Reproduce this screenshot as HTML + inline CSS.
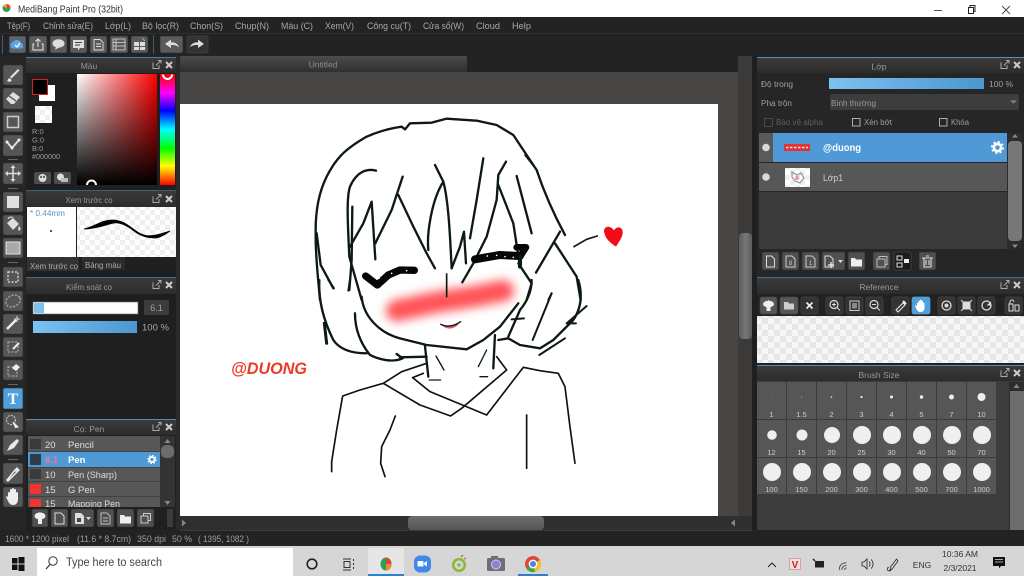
<!DOCTYPE html>
<html><head><meta charset="utf-8"><title>MediBang Paint Pro</title>
<style>html,body{margin:0;padding:0;background:#222;width:1024px;height:576px;overflow:hidden}svg{display:block}
svg.root{filter:blur(.3px)}
text{font-family:"Liberation Sans",sans-serif}</style></head><body>
<svg class="root" xmlns="http://www.w3.org/2000/svg" width="1024" height="576" viewBox="0 0 1024 576">
<defs>
<pattern id="ck" width="10" height="10" patternUnits="userSpaceOnUse"><rect width="10" height="10" fill="#fff"/><rect width="5" height="5" fill="#efefef"/><rect x="5" y="5" width="5" height="5" fill="#efefef"/></pattern>
<pattern id="ck2" width="12" height="12" patternUnits="userSpaceOnUse"><rect width="12" height="12" fill="#f6f6f6"/><rect width="6" height="6" fill="#e6e6e6"/><rect x="6" y="6" width="6" height="6" fill="#e6e6e6"/></pattern>
<linearGradient id="sv" x1="0" x2="1" y1="0" y2="0"><stop offset="0" stop-color="#fff"/><stop offset="1" stop-color="#f00"/></linearGradient>
<linearGradient id="svk" x1="0" x2="0" y1="0" y2="1"><stop offset="0" stop-color="#000" stop-opacity="0"/><stop offset="1" stop-color="#000"/></linearGradient>
<linearGradient id="hue" x1="0" x2="0" y1="0" y2="1"><stop offset="0" stop-color="#f00"/><stop offset=".17" stop-color="#f0f"/><stop offset=".33" stop-color="#00f"/><stop offset=".5" stop-color="#0ff"/><stop offset=".67" stop-color="#0f0"/><stop offset=".83" stop-color="#ff0"/><stop offset="1" stop-color="#f00"/></linearGradient>
<linearGradient id="blue" x1="0" x2="1" y1="0" y2="0"><stop offset="0" stop-color="#7cc2f2"/><stop offset="1" stop-color="#4b97cf"/></linearGradient>
<linearGradient id="hd" x1="0" x2="0" y1="0" y2="1"><stop offset="0" stop-color="#3a3a3a"/><stop offset="1" stop-color="#2c2c2c"/></linearGradient>
<linearGradient id="tab" x1="0" x2="0" y1="0" y2="1"><stop offset="0" stop-color="#4c4c4c"/><stop offset="1" stop-color="#2f2f2f"/></linearGradient>
<linearGradient id="thumb" x1="0" x2="1" y1="0" y2="0"><stop offset="0" stop-color="#5c5c5c"/><stop offset=".5" stop-color="#777"/><stop offset="1" stop-color="#5c5c5c"/></linearGradient>
<linearGradient id="thumbh" x1="0" x2="0" y1="0" y2="1"><stop offset="0" stop-color="#6c6c6c"/><stop offset="1" stop-color="#565656"/></linearGradient>
<filter id="bl" x="-30%" y="-150%" width="160%" height="400%"><feGaussianBlur stdDeviation="15"/></filter>
<g id="gear"><circle r="3.6" fill="none" stroke="#fff" stroke-width="2.6"/><circle r="5.6" fill="none" stroke="#fff" stroke-width="1.8" stroke-dasharray="2.2 2.2"/></g>
<g id="pop"><path d="M-4 -2.500V3.500H2V0" fill="none" stroke="#aaa" stroke-width="1"/><path d="M-1 .5L3.500 -4M1 -4.500H4V-1.500" fill="none" stroke="#aaa" stroke-width="1"/></g>
<g id="xx"><path d="M-3 -3L3 3M3 -3L-3 3" stroke="#ccc" stroke-width="2"/></g>
</defs>

<rect width="1024" height="576" fill="#232323"/>

<!-- title bar -->
<rect width="1024" height="17" fill="#fff"/>
<circle cx="6.500" cy="8" r="4" fill="#2f9c5c"/><path d="M6.500 4a4 4 0 0 1 4 4h-4z" fill="#e24a3c"/><path d="M3 6a4 4 0 0 1 3.500-2v4z" fill="#e9b93a"/>
<text x="18" y="12.300" font-size="10" fill="#333" textLength="105" lengthAdjust="spacingAndGlyphs">MediBang Paint Pro (32bit)</text>
<path d="M934 10.500H942" stroke="#555" stroke-width="1"/>
<path d="M968.500 7.500h5v6h-5zM970 7.500V5.500h5v6h-1.500" fill="none" stroke="#222" stroke-width="1"/>
<path d="M1002 6l8 8M1010 6l-8 8" stroke="#444" stroke-width=".9"/>

<!-- menu -->
<g font-size="9" fill="#a8a8a8">
<text x="7" y="29" textLength="23" lengthAdjust="spacingAndGlyphs">Tệp(F)</text>
<text x="43" y="29" textLength="50" lengthAdjust="spacingAndGlyphs">Chỉnh sửa(E)</text>
<text x="105" y="29" textLength="26" lengthAdjust="spacingAndGlyphs">Lớp(L)</text>
<text x="142" y="29" textLength="37" lengthAdjust="spacingAndGlyphs">Bộ lọc(R)</text>
<text x="190" y="29" textLength="33" lengthAdjust="spacingAndGlyphs">Chọn(S)</text>
<text x="235" y="29" textLength="34" lengthAdjust="spacingAndGlyphs">Chụp(N)</text>
<text x="281" y="29" textLength="32" lengthAdjust="spacingAndGlyphs">Màu (C)</text>
<text x="325" y="29" textLength="29" lengthAdjust="spacingAndGlyphs">Xem(V)</text>
<text x="367" y="29" textLength="44" lengthAdjust="spacingAndGlyphs">Công cụ(T)</text>
<text x="423" y="29" textLength="41" lengthAdjust="spacingAndGlyphs">Cửa sổ(W)</text>
<text x="476" y="29" textLength="24" lengthAdjust="spacingAndGlyphs">Cloud</text>
<text x="512" y="29" textLength="19" lengthAdjust="spacingAndGlyphs">Help</text>
</g>
<rect y="33" width="1024" height="1" fill="#303030"/>

<!-- toolbar -->
<rect x="2" y="35" width="1" height="19" fill="#3b5f78"/><rect x="153" y="35" width="1" height="19" fill="#3b5f78"/>
<g fill="#5a5a5a" stroke="#2a2a2a" stroke-width=".6">
<rect x="9" y="36" width="17" height="17" rx="2" fill="#5f646b"/><rect x="29" y="36" width="18" height="17" rx="2"/><rect x="50" y="36" width="17" height="17" rx="2"/><rect x="70" y="36" width="17" height="17" rx="2"/><rect x="90" y="36" width="17" height="17" rx="2"/><rect x="110" y="36" width="18" height="17" rx="2"/><rect x="131" y="36" width="17" height="17" rx="2"/><rect x="160" y="36" width="23" height="17" rx="2"/><rect x="187" y="36" width="21" height="17" rx="2" fill="#333" stroke="#4a4a4a"/>
</g>
<path d="M12.500 48.500a3.500 3.500 0 0 1 .5-6.500a4.500 4.500 0 0 1 8 1a3 3 0 0 1 .5 5.500z" fill="#5ba6e4"/><path d="M15 45l2 2 3-4" stroke="#fff" stroke-width="1.200" fill="none"/>
<path d="M38 39v8M35.500 41.500L38 39l2.500 2.500M34.500 44H33v6h10v-6h-1.500" stroke="#e8e8e8" fill="none" stroke-width="1"/>
<ellipse cx="58.500" cy="43.500" rx="6" ry="4.200" fill="#ddd"/><path d="M56 47l-1 3 4-2.500z" fill="#ddd"/>
<path d="M73 40h11v8h-4l-2 2.500V48h-5z" fill="#ddd"/><path d="M75 42.500h7M75 45h5" stroke="#444"/>
<path d="M94 39.500h6l3 3v7.500h-9z M96 44h5M96 46.500h5" fill="none" stroke="#ddd" stroke-width=".9"/>
<path d="M113 39h12v11h-12zM113 42.500h12M113 46h12M116 39v11" fill="none" stroke="#ddd" stroke-width=".8"/>
<path d="M134 42h5v4h-5zM140 42h5v4h-5zM134 47h5v3h-5zM140 47h5v3h-5z" fill="#ddd"/><path d="M142 38l3 3" stroke="#aaa"/>
<path d="M165 44l6-4.500v2.800c4 0 7 1.500 8 5-2-2-5-2.500-8-2.300v3z" fill="#ddd"/>
<path d="M204 44l-6-4.500v2.800c-4 0-7 1.500-8 5 2-2 5-2.500 8-2.300v3z" fill="#ddd"/>

<!-- left strip -->
<rect y="56" width="26" height="474" fill="#262626"/>
<g fill="#565656" stroke="#2e2e2e" stroke-width=".6">
<rect x="3" y="65" width="20" height="20" rx="2"/><rect x="3" y="88" width="20" height="21" rx="2"/><rect x="3" y="112" width="20" height="20" rx="2"/><rect x="3" y="135" width="20" height="21" rx="2"/>
<rect x="3" y="163" width="20" height="21" rx="2"/><rect x="3" y="192" width="20" height="20" rx="2"/><rect x="3" y="215" width="20" height="20" rx="2"/><rect x="3" y="238" width="20" height="20" rx="2"/>
<rect x="3" y="267" width="20" height="20" rx="2"/><rect x="3" y="291" width="20" height="20" rx="2"/><rect x="3" y="314" width="20" height="20" rx="2"/><rect x="3" y="337" width="20" height="20" rx="2"/><rect x="3" y="360" width="20" height="20" rx="2"/>
<rect x="3" y="388" width="20" height="21" rx="2" fill="#4f9fdc"/><rect x="3" y="412" width="20" height="20" rx="2"/><rect x="3" y="435" width="20" height="20" rx="2"/>
<rect x="3" y="463" width="20" height="21" rx="2"/><rect x="3" y="487" width="20" height="20" rx="2"/>
</g>
<g fill="#666"><rect x="8" y="159" width="10" height="1"/><rect x="8" y="188" width="10" height="1"/><rect x="8" y="262" width="10" height="1"/><rect x="8" y="384" width="10" height="1"/><rect x="8" y="459" width="10" height="1"/></g>
<path d="M7 81l2-3 3 2-2 2zM10 77l8-8 1.500 1.500-8 8z" fill="#e4e4e4"/>
<path d="M6 99l7-7 7 5-6 7h-3z" fill="#ddd"/><path d="M9 96l7 5" stroke="#4c4c4c" stroke-width="1.300"/>
<rect x="7.500" y="116.500" width="11" height="11" fill="none" stroke="#ccc" stroke-width="1.500"/>
<path d="M7 142l5 6 7-8" fill="none" stroke="#e0e0e0" stroke-width="2"/><circle cx="7" cy="142" r="1.500" fill="#eee"/><circle cx="12" cy="148" r="1.500" fill="#eee"/><circle cx="19" cy="140" r="1.500" fill="#eee"/>
<path d="M13 166v15M5.500 173.500h15" stroke="#ddd" stroke-width="1.500"/><path d="M13 165l-2.500 3h5zM13 182l-2.500-3h5zM5 173.500l3-2.500v5zM21 173.500l-3-2.500v5z" fill="#ddd"/>
<rect x="7" y="196" width="12" height="12" fill="#e0e0e0"/>
<path d="M7 223l6-5 6 6-6 6z" fill="#ddd"/><path d="M8 219a3 3 0 0 1 5-1" fill="none" stroke="#ddd"/><path d="M19 226c2 2 2 4 0 5-1-1-1-3 0-5z" fill="#ddd"/>
<rect x="6" y="242" width="14" height="12" fill="#aaa"/><rect x="6" y="242" width="14" height="12" fill="none" stroke="#ddd"/>
<rect x="8" y="272" width="10" height="10" fill="none" stroke="#ccc" stroke-width="1.500" stroke-dasharray="2 1.500"/>
<ellipse cx="13" cy="301" rx="7.500" ry="5.500" transform="rotate(-25 13 301)" fill="none" stroke="#aaa" stroke-width="1.300" stroke-dasharray="2 1.500"/>
<path d="M7 329l9-9" stroke="#eee" stroke-width="2.500"/><path d="M17 316v6M14 319h6" stroke="#ddd"/>
<rect x="8" y="342" width="10" height="10" fill="none" stroke="#bbb" stroke-dasharray="2 1.500"/><path d="M13 349l6-6" stroke="#eee" stroke-width="2"/>
<rect x="8" y="367" width="9" height="9" fill="none" stroke="#bbb" stroke-dasharray="2 1.500"/><path d="M12 368l4-4 4 3-4 4z" fill="#eee"/>
<text x="13" y="404" font-size="16" font-weight="bold" fill="#fff" text-anchor="middle" style="font-family:'Liberation Serif',serif">T</text>
<circle cx="11" cy="420" r="4.500" fill="none" stroke="#ccc" stroke-dasharray="2 1"/><path d="M13 422l5 5-2.500 .5z" fill="#eee" stroke="#eee"/>
<path d="M7 451l3-6 7-6 2 2-5 7z" fill="#e8e8e8"/>
<path d="M8 479l-1 1 1 1 9-9-2-2z" fill="none" stroke="#eee" stroke-width="1.500"/><path d="M16 468l3 3" stroke="#eee" stroke-width="2.500"/>
<path d="M8 497v-4a1 1 0 0 1 2 0v-3a1 1 0 0 1 2 0v-1a1 1 0 0 1 2 0v1a1 1 0 0 1 2 0v3a1 1 0 0 1 2 0v6c0 4-2 6-5 6s-4-2-5-4l-2-4c0-1 1-1 2 0z" fill="#eee"/>

<!-- colour panel -->
<rect x="26" y="57" width="150" height="473" fill="#1f1f1f"/>
<rect x="176" y="56" width="4" height="474" fill="#2a2a2a"/>
<rect x="26" y="57" width="150" height="1" fill="#4b7f9f"/>
<rect x="26" y="58" width="150" height="15" fill="url(#hd)"/>
<text x="89" y="69" font-size="8.500" fill="#999" text-anchor="middle">Màu</text>
<use href="#pop" x="157" y="65"/><use href="#xx" x="169" y="65"/>
<rect x="39" y="85" width="16" height="16" fill="#fff"/>
<rect x="32.500" y="79.500" width="15" height="15" fill="#000" stroke="#d52020" stroke-width="1"/>
<rect x="35" y="106" width="17" height="17" fill="url(#ck)"/>
<g font-size="7.500" fill="#9a9a9a"><text x="32" y="134">R:0</text><text x="32" y="142.500">G:0</text><text x="32" y="151">B:0</text><text x="32" y="159" textLength="28" lengthAdjust="spacingAndGlyphs">#000000</text></g>
<rect x="34" y="172" width="17" height="12" rx="2" fill="#4c4c4c"/><rect x="54" y="172" width="17" height="12" rx="2" fill="#4c4c4c"/>
<circle cx="42.500" cy="178" r="4" fill="#ddd"/><circle cx="41" cy="177" r="1" fill="#444"/><circle cx="44" cy="177" r="1" fill="#444"/><circle cx="60.500" cy="177" r="3.500" fill="#ddd"/><rect x="61" y="178" width="7" height="4" fill="#bbb"/>
<rect x="77" y="74" width="80" height="111" fill="url(#sv)"/><rect x="77" y="74" width="80" height="111" fill="url(#svk)"/>
<rect x="160" y="74" width="15" height="111" fill="url(#hue)"/>
<path d="M163 74.500a4.500 4.500 0 0 0 9 0" fill="none" stroke="#fff" stroke-width="2"/>
<path d="M87 185a4.500 4.500 0 0 1 9 0" fill="none" stroke="#fff" stroke-width="2"/>

<!-- brush preview -->
<rect x="26" y="190" width="150" height="1" fill="#3f5f75"/>
<rect x="26" y="191" width="150" height="16" fill="url(#hd)"/>
<text x="89" y="203" font-size="8.500" fill="#999" text-anchor="middle" textLength="47" lengthAdjust="spacingAndGlyphs">Xem trước cọ</text>
<use href="#pop" x="157" y="199"/><use href="#xx" x="169" y="199"/>
<rect x="27" y="207" width="49" height="50" fill="#fff"/>
<rect x="77" y="207" width="99" height="50" fill="url(#ck)"/>
<text x="30" y="216" font-size="8" fill="#5a94c4" textLength="35" lengthAdjust="spacingAndGlyphs">* 0.44mm</text>
<circle cx="51" cy="231" r="1" fill="#222"/>
<path d="M84 229c12-3 18-9 28-9s16 5 24 11 14 5 20 4 10-3 14-4c-4 3-10 7-16 7s-14-2-20-7-14-9-20-8-18 6-30 6z" fill="#000" stroke="#000" stroke-width=".8"/>
<rect x="27" y="257" width="52" height="14" fill="#333"/>
<text x="30" y="269" font-size="8.500" fill="#aaa" textLength="48" lengthAdjust="spacingAndGlyphs">Xem trước cọ</text>
<rect x="82" y="257" width="43" height="13" fill="#2b2b2b"/>
<text x="85" y="268" font-size="8.500" fill="#aaa" textLength="36" lengthAdjust="spacingAndGlyphs">Bảng màu</text>

<!-- brush control -->
<rect x="26" y="277" width="150" height="1" fill="#3f6f8f"/>
<rect x="26" y="278" width="150" height="16" fill="url(#hd)"/>
<text x="89" y="290" font-size="8.500" fill="#999" text-anchor="middle" textLength="46" lengthAdjust="spacingAndGlyphs">Kiểm soát cọ</text>
<use href="#pop" x="157" y="285"/><use href="#xx" x="169" y="285"/>
<rect x="33" y="302" width="105" height="12" fill="#fff" stroke="#666" stroke-width=".6"/>
<rect x="34" y="303" width="10" height="10" fill="#7cc0ef"/>
<rect x="144" y="300" width="25" height="15" rx="2" fill="#3c3c3c"/>
<text x="156.500" y="311" font-size="9" fill="#a0a0a0" text-anchor="middle">6.1</text>
<rect x="33" y="321" width="104" height="12" fill="url(#blue)"/>
<text x="142" y="330.500" font-size="9.500" fill="#a8a8a8" textLength="27" lengthAdjust="spacingAndGlyphs">100 %</text>

<!-- pen list -->
<rect x="26" y="419" width="150" height="1" fill="#4b8fbd"/>
<rect x="26" y="420" width="150" height="15" fill="url(#hd)"/>
<text x="89" y="432" font-size="8.500" fill="#999" text-anchor="middle">Cọ: Pen</text>
<use href="#pop" x="157" y="427"/><use href="#xx" x="169" y="427"/>
<rect x="28" y="436" width="132" height="71" fill="#575757"/>
<rect x="28" y="452" width="132" height="15" fill="#4f9ad6"/>
<path d="M28 467.500H160M28 481.500H160M28 496.500H160M28 451.500H160" stroke="#3d3d3d" stroke-width=".8"/>
<rect x="30" y="439" width="11" height="10" fill="#3a3a3a"/><rect x="30" y="454" width="11" height="11" fill="#2e3a45"/><rect x="30" y="469" width="11" height="10" fill="#3a3a3a"/>
<rect x="30" y="484" width="11" height="10" fill="#f03434"/><rect x="30" y="499" width="11" height="8" fill="#f03434"/>
<g font-size="9.500" fill="#ddd">
<text x="45" y="448">20</text><text x="68" y="448">Pencil</text>
<text x="45" y="463" fill="#f07a90" font-weight="bold">6.1</text><text x="68" y="463" fill="#fff" font-weight="bold">Pen</text>
<text x="45" y="478">10</text><text x="68" y="478" textLength="49" lengthAdjust="spacingAndGlyphs">Pen (Sharp)</text>
<text x="45" y="493">15</text><text x="68" y="493">G Pen</text>
</g>
<svg x="28" y="496" width="132" height="11" viewBox="28 496 132 11"><text x="45" y="507" font-size="9.500" fill="#ddd">15</text><text x="68" y="507" font-size="9.500" fill="#ddd" textLength="52" lengthAdjust="spacingAndGlyphs">Mapping Pen</text></svg>
<use href="#gear" transform="translate(152 459.500) scale(.72)"/>
<rect x="160" y="436" width="15" height="71" fill="#333"/>
<rect x="161" y="445" width="13" height="13" rx="5" fill="#6c6c6c"/>
<path d="M167.500 439l-3 4h6zM167.500 505l-3-4h6z" fill="#888"/>
<rect x="26" y="507" width="150" height="23" fill="#202020"/>
<g fill="#505050" stroke="#2b2b2b" stroke-width=".6"><rect x="32" y="509" width="16" height="18" rx="2"/><rect x="51" y="509" width="17" height="18" rx="2"/><rect x="71" y="509" width="23" height="18" rx="2"/><rect x="97" y="509" width="17" height="18" rx="2"/><rect x="117" y="509" width="17" height="18" rx="2"/><rect x="137" y="509" width="17" height="18" rx="2"/></g>
<rect x="167" y="509" width="6" height="18" fill="#3b3b3b"/>
<path d="M40 512l4.500 4.500H42V524h-4v-7.500h-3z" fill="#eee"/><ellipse cx="40" cy="516" rx="5.500" ry="3.500" fill="#eee"/><path d="M55 513h6l3 3v8h-9z" fill="none" stroke="#ddd"/>
<path d="M75 513h6l3 3v8h-9z" fill="#ddd"/><rect x="77" y="518" width="4" height="4" fill="#444"/><path d="M86 517l2.500 3 2.500-3z" fill="#ddd"/>
<path d="M101 513h6l3 3v8h-9zM103 518h5M103 521h5" fill="none" stroke="#bbb"/>
<path d="M120 515h4l1 1.500h6v7h-11z" fill="#eee"/>
<path d="M141 516h7v7h-7zM143.500 516v-2.500h7v7H148" fill="none" stroke="#ccc"/>

<!-- centre -->
<rect x="180" y="56" width="572" height="17" fill="#232323"/>
<rect x="180" y="56" width="287" height="16" rx="2" fill="url(#tab)"/>
<text x="323" y="67.500" font-size="8.500" fill="#8c8c8c" text-anchor="middle">Untitled</text>
<rect x="180" y="72" width="558" height="444" fill="#474645"/>
<rect x="180" y="104" width="538" height="412" fill="#fff"/>
<rect x="738" y="56" width="14" height="474" fill="#3b3a39"/>
<rect x="739" y="233" width="13" height="106" rx="4" fill="url(#thumb)"/>
<rect x="752" y="56" width="5" height="474" fill="#1f1f1f"/>
<rect x="180" y="516" width="572" height="14" fill="#2f2f2f"/>
<rect x="408" y="516" width="136" height="14" rx="4" fill="url(#thumbh)"/>
<path d="M186 523l-4 -3.500v7z" fill="#888"/><path d="M732 523l4-3.500v7z" fill="#888" transform="translate(-1 0)"/>
<rect y="530" width="1024" height="16" fill="#232323"/>
<rect x="180" y="530" width="572" height="1" fill="#3c3c3c"/>
<g font-size="9" fill="#9d9d9d">
<text x="5" y="542" textLength="64" lengthAdjust="spacingAndGlyphs">1600 * 1200 pixel</text>
<text x="77" y="542" textLength="54" lengthAdjust="spacingAndGlyphs">(11.6 * 8.7cm)</text>
<text x="137" y="542" textLength="29" lengthAdjust="spacingAndGlyphs">350 dpi</text>
<text x="172" y="542" textLength="20" lengthAdjust="spacingAndGlyphs">50 %</text>
<text x="198" y="542" textLength="51" lengthAdjust="spacingAndGlyphs">( 1395, 1082 )</text>
</g>

<!-- drawing -->
<g>
<g transform="translate(220 280) scale(.3333)">
<path d="M530 92L640 68L760 50L850 32" fill="none" stroke="#ff5357" stroke-width="64" stroke-linecap="round" filter="url(#bl)"/>
</g>
<g transform="translate(300 100) scale(.3333)" fill="none" stroke="#0d1a12" stroke-width="7" stroke-linecap="round" stroke-linejoin="round">
<path d="M60 600C55 540 46 470 47 400C46 340 55 280 80 230C105 180 130 150 200 110C240 92 270 85 305 80L315 88L330 70L395 68L440 56L530 62L590 75L640 105L680 165L710 210C730 270 760 340 795 405"/>
<path d="M100 565L62 495L50 400"/>
<path d="M228 212C200 205 170 215 150 260C140 290 142 350 148 470L185 600"/>
<path d="M148 570L155 480L157 320"/>
<path d="M150 440L190 370L215 305L226 478"/>
<path d="M226 430L275 330L308 230"/>
<path d="M295 285L340 380L380 460L405 505"/>
<path d="M385 450C380 400 395 300 430 245C445 300 450 400 455 505"/>
<path d="M405 195L430 245"/>
<path d="M455 505L480 440L492 395L498 490"/>
<path d="M510 415L530 300L550 175"/>
<path d="M487 547L520 490L560 410L590 300L595 225L618 185"/>
<path d="M595 255L640 370L660 500"/>
<path d="M650 228L695 400"/>
<path d="M440 522L440 590" stroke-width="5"/>
<path d="M655 490L695 550L680 600"/>
<path d="M675 165L712 212" stroke-width="5"/>
<path d="M780 395L708 518"/>
<path d="M765 430L830 530L842 600"/>
<path d="M755 580L745 600" stroke-width="6"/>
<path d="M822 440L860 418L892 408" stroke-width="5"/>
<path d="M525 478L600 465L660 468" stroke="#060606" stroke-width="24"/>
<path d="M650 442L678 442L660 470" stroke="#060606" stroke-width="20"/>
<path d="M197 528L232 555L265 525L300 510L343 511" stroke="#060606" stroke-width="22"/>
<path d="M660 470L660 500" stroke-width="12"/>
<g stroke="none" fill="#fff"><circle cx="562" cy="468" r="2.500"/><circle cx="590" cy="466" r="2.500"/><circle cx="615" cy="470" r="2.500"/><circle cx="640" cy="472" r="2.500"/><circle cx="320" cy="512" r="2.500"/><circle cx="275" cy="520" r="2.500"/><circle cx="237" cy="535" r="2.500"/></g>
<path d="M912 392C915 375 935 378 942 392C948 378 970 378 968 400C966 415 955 428 948 440C935 430 915 420 912 392z" fill="#f20c18" stroke="none"/>
</g>
<g transform="translate(220 280) scale(.3333)" fill="none" stroke="#0d1a12" stroke-width="7" stroke-linecap="round" stroke-linejoin="round">
<path d="M298 0C295 60 310 120 340 180C360 210 400 220 440 220"/>
<path d="M320 190L313 130" stroke-width="9"/>
<path d="M325 0L342 25M390 0L385 32" stroke-width="6"/>
<path d="M425 50C430 110 480 160 540 175L620 195L740 208L790 180L840 140L895 70"/>
<path d="M935 0C935 30 925 60 900 90L865 170"/>
<path d="M405 100C405 160 430 200 450 225C480 240 520 248 548 235L530 222"/>
<path d="M540 232L620 230"/>
<path d="M615 198L625 290"/>
<path d="M825 165L820 265"/>
<path d="M648 228L672 270M800 210L775 260M628 300L662 300M780 290L803 290" stroke-width="4"/>
<path d="M1075 0C1090 50 1080 90 1060 120L1000 180L960 205L900 195L865 175L835 180"/>
<path d="M1100 78L1040 130L1068 130" stroke-width="6"/>
<path d="M995 40L938 180" stroke-width="6"/>
<path d="M958 225L1035 175" stroke-width="6"/>
<path d="M875 118L912 115" stroke-width="6"/>
<g stroke="#111" stroke-width="5">
<path d="M620 250L545 275L490 310L420 330L368 348L350 450L335 545L335 575"/>
<path d="M490 310L600 375L692 408L725 385L860 270L830 230"/>
<path d="M578 293L610 280"/>
<path d="M578 293L630 335L800 405L910 262"/>
<path d="M910 262L960 272L1015 280L1035 320L1050 440L1065 550"/>
<path d="M526 408L510 450L485 500L482 550L495 590"/>
<path d="M920 405L920 565"/>
</g>
<path d="M668 138C680 150 705 148 716 132Z" fill="#e2606a" stroke="none"/>
<path d="M662 133C680 142 700 140 722 125" stroke="#111" stroke-width="4"/>
</g>
</g>
<text x="231" y="374" font-size="16.500" font-weight="bold" font-style="italic" fill="#ee3a24" textLength="76" lengthAdjust="spacingAndGlyphs">@DUONG</text>

<!-- right panel: layers -->
<rect x="757" y="57" width="267" height="473" fill="#262626"/>
<rect x="757" y="57" width="267" height="1" fill="#4b8fbd"/>
<rect x="757" y="58" width="267" height="15" fill="url(#hd)"/>
<text x="879" y="69.500" font-size="8.500" fill="#999" text-anchor="middle">Lớp</text>
<use href="#pop" x="1005" y="65"/><use href="#xx" x="1017" y="65"/>
<text x="761" y="87" font-size="8.500" fill="#a0a0a0" textLength="32" lengthAdjust="spacingAndGlyphs">Độ trong</text>
<rect x="829" y="78" width="155" height="11" fill="url(#blue)"/>
<text x="989" y="87" font-size="8.500" fill="#a0a0a0" textLength="24" lengthAdjust="spacingAndGlyphs">100 %</text>
<text x="761" y="106" font-size="8.500" fill="#a0a0a0" textLength="31" lengthAdjust="spacingAndGlyphs">Pha trộn</text>
<rect x="830" y="94" width="189" height="16" rx="2" fill="#3d3d3d"/>
<text x="831" y="106" font-size="8.500" fill="#9a9a9a" textLength="45" lengthAdjust="spacingAndGlyphs">Bình thường</text>
<path d="M1010 100.500l3.500 3 3.500-3z" fill="#888"/>
<rect x="764.500" y="118.500" width="8" height="8" fill="none" stroke="#4a4a4a"/>
<text x="776" y="125" font-size="8.500" fill="#5f5f5f" textLength="47" lengthAdjust="spacingAndGlyphs">Bảo vệ alpha</text>
<rect x="852.500" y="118.500" width="7.500" height="7.500" fill="none" stroke="#b0b0b0"/>
<text x="864" y="125" font-size="8.500" fill="#a0a0a0" textLength="28" lengthAdjust="spacingAndGlyphs">Xén bớt</text>
<rect x="939.500" y="118.500" width="7.500" height="7.500" fill="none" stroke="#b0b0b0"/>
<text x="951" y="125" font-size="8.500" fill="#a0a0a0" textLength="18" lengthAdjust="spacingAndGlyphs">Khóa</text>
<rect x="759" y="133" width="248" height="116" fill="#3b3b3b"/>
<rect x="759" y="133" width="14" height="29" fill="#5a5a5a"/>
<rect x="773" y="133" width="234" height="29" fill="#4f9ad6"/>
<rect x="759" y="163" width="248" height="28" fill="#575757"/>
<path d="M759 162.500H1007M759 191.500H1007" stroke="#262626"/>
<circle cx="766" cy="147.500" r="3.800" fill="#d8d8d8"/><circle cx="766" cy="177" r="3.800" fill="#d8d8d8"/>
<rect x="784" y="144" width="26" height="7" fill="#e2333a"/><path d="M786 147.500h22" stroke="#fbdcdc" stroke-width="1.500" stroke-dasharray="2.500 1.500"/>
<rect x="785" y="168" width="25" height="19" fill="url(#ck)"/>
<path d="M792 172l5 3 4-2 3 5-4 5-5-2-3-4z" fill="none" stroke="#999" stroke-width="1.300"/><circle cx="797" cy="178" r="2" fill="#e99"/>
<text x="823" y="151" font-size="10" font-weight="bold" fill="#fff" textLength="38" lengthAdjust="spacingAndGlyphs">@duong</text>
<text x="823" y="181" font-size="9.500" fill="#ccc" textLength="20" lengthAdjust="spacingAndGlyphs">Lớp1</text>
<use href="#gear" transform="translate(997.500 147.500)"/>
<rect x="1007" y="133" width="15" height="116" fill="#2b2b2b"/>
<rect x="1008" y="141" width="14" height="100" rx="4" fill="#777"/>
<path d="M1015 134l-3 3.500h6zM1015 248l-3-3.500h6z" fill="#888"/>
<g fill="#505050" stroke="#2b2b2b" stroke-width=".6"><rect x="762" y="252" width="17" height="18" rx="2"/><rect x="782" y="252" width="17" height="18" rx="2"/><rect x="802" y="252" width="17" height="18" rx="2"/><rect x="822" y="252" width="23" height="18" rx="2"/><rect x="848" y="252" width="17" height="18" rx="2"/><rect x="873" y="252" width="17" height="18" rx="2"/><rect x="894" y="252" width="17" height="18" rx="2" fill="#1c1c1c" stroke="#555"/><rect x="919" y="252" width="17" height="18" rx="2"/></g>
<path d="M766.500 256h5l3 3v8h-8z" fill="none" stroke="#ddd"/>
<path d="M786 256h6l3 3v8h-9z" fill="none" stroke="#ccc"/><text x="790.500" y="265" font-size="6" fill="#ccc" text-anchor="middle">8</text>
<path d="M806 256h6l3 3v8h-9z" fill="none" stroke="#ccc"/><text x="810.500" y="265" font-size="6" fill="#ccc" text-anchor="middle">1</text>
<path d="M825 256h5l3 3v8h-8z" fill="none" stroke="#ddd"/><path d="M831 262v6M828 265h6" stroke="#eee" stroke-width="1.300"/><path d="M838 260l2.500 3 2.500-3z" fill="#ddd"/>
<path d="M851 258h4l1 1.500h6v7h-11z" fill="#eee"/>
<path d="M877 259h8v8h-8zM879 259v-2.500h8v8h-2" fill="none" stroke="#bbb"/>
<path d="M897 256h5v4h-5zM897 263h5v4h-5z" fill="none" stroke="#ddd"/><rect x="904" y="259" width="5" height="4" fill="#eee"/>
<path d="M922 258h11M924 258v9h7v-9M926 260v5M929 260v5M926 256h3" fill="none" stroke="#ddd" stroke-width="1.100"/>

<!-- reference -->
<rect x="757" y="277" width="267" height="1" fill="#3f6f8f"/>
<rect x="757" y="278" width="267" height="16" fill="url(#hd)"/>
<text x="879" y="290" font-size="8.500" fill="#999" text-anchor="middle">Reference</text>
<use href="#pop" x="1005" y="285"/><use href="#xx" x="1017" y="285"/>
<rect x="757" y="294" width="267" height="22" fill="#222"/>
<g fill="#333" stroke="#454545" stroke-width=".7">
<rect x="760" y="297" width="17" height="17" rx="2" fill="#565656"/><rect x="780" y="297" width="18" height="17" rx="2" fill="#565656"/><rect x="801" y="297" width="17" height="17" rx="2"/><rect x="826" y="297" width="17" height="17" rx="2"/><rect x="846" y="297" width="17" height="17" rx="2"/><rect x="866" y="297" width="17" height="17" rx="2"/><rect x="892" y="297" width="17" height="17" rx="2"/><rect x="912" y="297" width="18" height="17" rx="2" fill="#4f9fdc" stroke="#4f9fdc"/><rect x="938" y="297" width="17" height="17" rx="2"/><rect x="958" y="297" width="17" height="17" rx="2"/><rect x="978" y="297" width="17" height="17" rx="2"/><rect x="1005" y="297" width="17" height="17" rx="2"/>
</g>
<path d="M768.500 300l4.500 4.500h-2.500V311h-4v-6.500H764z" fill="#eee"/><ellipse cx="768.500" cy="304" rx="5.500" ry="3.300" fill="#eee"/>
<path d="M784 302h4l1 1.500h5v6h-10z" fill="#ccc"/>
<path d="M806.500 302.500l6 6M812.500 302.500l-6 6" stroke="#eee" stroke-width="1.700"/>
<circle cx="834" cy="304.500" r="4" fill="none" stroke="#ddd" stroke-width="1.200"/><path d="M837 307.500l3 3M832 304.500h4M834 302.500v4" stroke="#ddd"/>
<path d="M850 301h9v9.500h-9z" fill="none" stroke="#ccc"/><path d="M852 303h5v5.500h-5z" fill="#888"/>
<circle cx="874" cy="304.500" r="4" fill="none" stroke="#ddd" stroke-width="1.200"/><path d="M877 307.500l3 3M872 304.500h4" stroke="#ddd"/>
<path d="M896 310l7-7 2 2-7 7z" fill="none" stroke="#eee"/><path d="M903 301l3 3" stroke="#eee" stroke-width="2"/>
<path d="M917 306v-3a1 1 0 0 1 1.500 0v-2a1 1 0 0 1 1.500 0v-1a1 1 0 0 1 1.500 0v1a1 1 0 0 1 1.500 0v2a1 1 0 0 1 1.500 0v5c0 3-2 4-4 4s-3-1-4-3l-1.500-3c0-1 1-1 1.500 0z" fill="#fff"/>
<circle cx="946.500" cy="305.500" r="4.500" fill="none" stroke="#ddd" stroke-width="1.300"/><circle cx="946.500" cy="305.500" r="2" fill="#ddd"/>
<rect x="962.500" y="301.500" width="8" height="8" fill="#ddd"/><path d="M961 300l2 2M972 300l-2 2M961 311l2-2M972 311l-2-2" stroke="#ddd"/>
<circle cx="986.500" cy="305.500" r="4.500" fill="none" stroke="#ddd" stroke-width="1.300"/><path d="M986.500 305.500h4.500v-4z" fill="#ddd"/>
<path d="M1009 304h4v7h-4zM1015 305h4v6h-4zM1010 304v-2a2 2 0 0 1 4 0" fill="none" stroke="#ddd"/>
<rect x="757" y="316" width="267" height="47" fill="url(#ck2)"/>
<rect x="757" y="363" width="267" height="2" fill="#222"/>

<!-- brush size -->
<rect x="757" y="365" width="267" height="1" fill="#4b8fbd"/>
<rect x="757" y="366" width="267" height="15" fill="url(#hd)"/>
<text x="879" y="378" font-size="8.500" fill="#999" text-anchor="middle">Brush Size</text>
<use href="#pop" x="1005" y="373"/><use href="#xx" x="1017" y="373"/>
<rect x="757" y="381" width="267" height="149" fill="#3c3c3c"/>
<g fill="#565656">
<rect x="757" y="382" width="29" height="37"/><rect x="787" y="382" width="29" height="37"/><rect x="817" y="382" width="29" height="37"/><rect x="847" y="382" width="29" height="37"/><rect x="877" y="382" width="29" height="37"/><rect x="907" y="382" width="29" height="37"/><rect x="937" y="382" width="29" height="37"/><rect x="967" y="382" width="29" height="37"/>
<rect x="757" y="420" width="29" height="37"/><rect x="787" y="420" width="29" height="37"/><rect x="817" y="420" width="29" height="37"/><rect x="847" y="420" width="29" height="37"/><rect x="877" y="420" width="29" height="37"/><rect x="907" y="420" width="29" height="37"/><rect x="937" y="420" width="29" height="37"/><rect x="967" y="420" width="29" height="37"/>
<rect x="757" y="458" width="29" height="36"/><rect x="787" y="458" width="29" height="36"/><rect x="817" y="458" width="29" height="36"/><rect x="847" y="458" width="29" height="36"/><rect x="877" y="458" width="29" height="36"/><rect x="907" y="458" width="29" height="36"/><rect x="937" y="458" width="29" height="36"/><rect x="967" y="458" width="29" height="36"/>
</g>
<g fill="#efefef">
<circle cx="771.500" cy="397" r=".3"/><circle cx="801.500" cy="397" r=".6" fill="#aaa"/><circle cx="831.500" cy="397" r=".8"/><circle cx="861.500" cy="397" r="1.100"/><circle cx="891.500" cy="397" r="1.500"/><circle cx="921.500" cy="397" r="1.700"/><circle cx="951.500" cy="397" r="2.500"/><circle cx="981.500" cy="397" r="4"/>
<circle cx="772" cy="435" r="4.800"/><circle cx="802" cy="435" r="5.500"/><circle cx="832" cy="435" r="8"/><circle cx="862" cy="435" r="9"/><circle cx="892" cy="435" r="9"/><circle cx="922" cy="435" r="9"/><circle cx="952" cy="435" r="9"/><circle cx="982" cy="435" r="9"/>
<circle cx="772" cy="472" r="9"/><circle cx="802" cy="472" r="9"/><circle cx="832" cy="472" r="9"/><circle cx="862" cy="472" r="9"/><circle cx="892" cy="472" r="9"/><circle cx="922" cy="472" r="9"/><circle cx="952" cy="472" r="9"/><circle cx="982" cy="472" r="9"/>
</g>
<g font-size="7.500" fill="#cfcfcf" text-anchor="middle">
<text x="771.500" y="417">1</text><text x="801.500" y="417">1.5</text><text x="831.500" y="417">2</text><text x="861.500" y="417">3</text><text x="891.500" y="417">4</text><text x="921.500" y="417">5</text><text x="951.500" y="417">7</text><text x="981.500" y="417">10</text>
<text x="771.500" y="455">12</text><text x="801.500" y="455">15</text><text x="831.500" y="455">20</text><text x="861.500" y="455">25</text><text x="891.500" y="455">30</text><text x="921.500" y="455">40</text><text x="951.500" y="455">50</text><text x="981.500" y="455">70</text>
<text x="771.500" y="492">100</text><text x="801.500" y="492">150</text><text x="831.500" y="492">200</text><text x="861.500" y="492">300</text><text x="891.500" y="492">400</text><text x="921.500" y="492">500</text><text x="951.500" y="492">700</text><text x="981.500" y="492">1000</text>
</g>
<rect x="1009" y="382" width="15" height="148" fill="#2d2d2d"/>
<rect x="1010" y="391" width="14" height="139" fill="#6d6d6d"/>
<path d="M1016.500 384l-3 4h6z" fill="#888"/>

<!-- taskbar -->
<rect y="546" width="1024" height="30" fill="#d6d6d6"/>
<rect x="12" y="558" width="5.500" height="5.500" fill="#111"/><rect x="18.500" y="557" width="6" height="6.500" fill="#111"/><rect x="12" y="564.500" width="5.500" height="5.500" fill="#111"/><rect x="18.500" y="564.500" width="6" height="6.500" fill="#111"/>
<rect x="37" y="548" width="256" height="28" fill="#fff"/>
<circle cx="53" cy="561" r="4.200" fill="none" stroke="#333" stroke-width="1"/><path d="M50 564.500l-4 4.500" stroke="#333" stroke-width="1.200"/>
<text x="66" y="566" font-size="11.500" fill="#444" textLength="96" lengthAdjust="spacingAndGlyphs">Type here to search</text>
<circle cx="312" cy="564" r="4.800" fill="none" stroke="#222" stroke-width="1.600"/>
<path d="M343 559h8M343 570h8M344 561.500h6v6h-6z" fill="none" stroke="#333"/><path d="M353.500 559v2M353.500 563v2M353.500 567v2" stroke="#333"/>
<rect x="368" y="548" width="36" height="28" fill="#e6e6e6"/><rect x="368" y="574" width="36" height="2" fill="#2f7fd0"/>
<ellipse cx="386" cy="564" rx="5.500" ry="6.500" fill="#2b9d5d"/><path d="M386 557.500c3 0 5.500 3 5.500 6.500h-5.500z" fill="#e3403a"/><path d="M386 564h5.500a5.500 6.500 0 0 1-5.500 6.500z" fill="#f08a2c"/>
<rect x="414" y="555.500" width="17" height="17" rx="6" fill="#3f8ae8"/><rect x="417.500" y="561" width="6" height="5.500" rx="1" fill="#fff"/><path d="M424 563l3-2v5.500l-3-2z" fill="#fff"/>
<circle cx="459" cy="565" r="5.800" fill="none" stroke="#8cb83c" stroke-width="2.600"/><circle cx="459" cy="565" r="1.800" fill="#8cb83c"/><path d="M461 557l2-2M464 559l2-1" stroke="#d86a30" stroke-width="1.500"/>
<rect x="487" y="558" width="18" height="13" rx="1.500" fill="#6b7076"/><rect x="491" y="556" width="7" height="3" fill="#6b7076"/><circle cx="496" cy="564.500" r="4.500" fill="#8d7fe0" stroke="#ccc"/>
<circle cx="533" cy="564" r="8" fill="#e0463a"/><path d="M533 564l7-4a8 8 0 0 1-5 12z" fill="#f3c02e"/><path d="M533 564l2 8a8 8 0 0 1-9-4z" fill="#3da54c"/><circle cx="533" cy="564" r="3.700" fill="#4a87e8" stroke="#fff" stroke-width="1.300"/>
<rect x="518" y="574" width="30" height="2" fill="#2f7fd0"/>
<path d="M768 567l4-4 4 4" fill="none" stroke="#222" stroke-width="1"/>
<rect x="789.500" y="558.500" width="11" height="11" fill="#f4dede" stroke="#d9a0a0"/><text x="795" y="568" font-size="10" font-weight="bold" fill="#c8281e" text-anchor="middle">V</text>
<rect x="815" y="561" width="9" height="6.500" fill="#222"/><path d="M813 559l2 2" stroke="#222" stroke-width="1.500"/>
<path d="M839.500 570a6 6 0 0 1 7-7M842 570a4 4 0 0 1 4.500-4.500M844.500 570a2 2 0 0 1 2-2" fill="none" stroke="#555"/>
<path d="M862 562h2l3-3v10l-3-3h-2z" fill="none" stroke="#222" stroke-width=".8"/><path d="M869 561.500a3.500 3.500 0 0 1 0 5M871 559.500a6 6 0 0 1 0 9" fill="none" stroke="#222" stroke-width=".8"/>
<path d="M890 570l2-1 6-8-1.500-2-6 8zM889 567a2 2 0 1 0 2 3" fill="none" stroke="#222" stroke-width=".8"/>
<text x="922" y="568" font-size="8.500" fill="#333" text-anchor="middle">ENG</text>
<text x="960" y="557" font-size="8.500" fill="#333" text-anchor="middle" textLength="36" lengthAdjust="spacingAndGlyphs">10:36 AM</text>
<text x="960" y="571" font-size="8.500" fill="#333" text-anchor="middle" textLength="33" lengthAdjust="spacingAndGlyphs">2/3/2021</text>
<path d="M993 557h12v9h-4l-2 2.500V566h-6z" fill="#111"/><path d="M995 559.500h8M995 562h8" stroke="#ddd" stroke-width=".8"/>
</svg>
</body></html>
